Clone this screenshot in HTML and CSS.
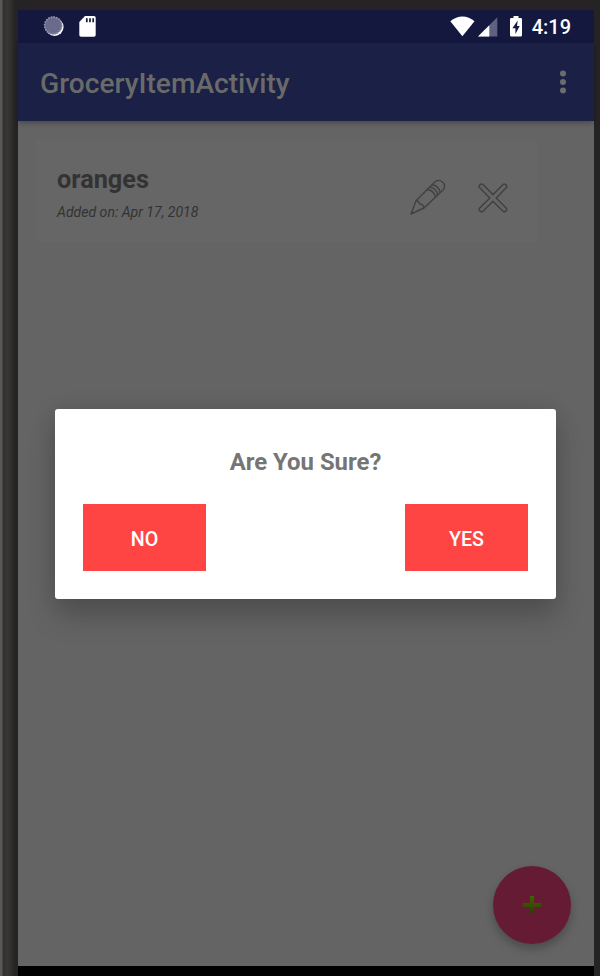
FILE: index.html
```
<!DOCTYPE html>
<html lang="en">
<head>
<meta charset="utf-8">
<title>GroceryItemActivity</title>
<link rel="stylesheet" href="styles.css">
</head>
<body>
<div class="device">
  <div class="screen">
    <header class="status">
      <svg class="sync" width="22" height="22" viewBox="0 0 22 22"><circle cx="11.600" cy="11" r="9" fill="#fff"/><circle cx="10.200" cy="9.500" r="9" fill="#686b8b"/><circle cx="10.200" cy="9.500" r="8.500" fill="none" stroke="#9496ad" stroke-width="1.800" stroke-dasharray="1.400 1.270"/></svg>
      <svg class="sd" width="17" height="21" viewBox="0 0 17 21"><path fill="#fff" d="M6 0h9q1.700 0 1.700 1.700v17.300q0 1.700-1.700 1.700H2q-1.700 0-1.700-1.700V6z"/><path stroke="#14183f" stroke-width="1.700" d="M7.800 2.300v4M11 2.300v4M14.200 2.300v4"/></svg>
      <svg class="wifi" width="26" height="21" viewBox="0 0 26 21"><path fill="#fff" d="M.3 5.200Q6 .4 12.500.4T24.500 5.200L12.400 20.200z"/></svg>
      <svg class="signal" width="20" height="20" viewBox="0 0 20 20"><path fill="#5e6180" d="M19.300.3v19.200H0z"/><path fill="#fff" d="M11.300 8.200v11.300H0z"/></svg>
      <svg class="battery" width="13" height="21" viewBox="0 0 13 21"><path fill="#fff" d="M3.500 0h5v2h2.300q1.200 0 1.200 1.200v16q0 1.300-1.200 1.300H1.200Q0 20.500 0 19.200v-16Q0 2 1.200 2h2.300z"/><path fill="#14183f" d="M7.700 4.500 2.400 12.200h3V18L9.700 10H7z"/></svg>
      <span class="clock">4:19</span>
    </header>
    <div class="toolbar">
      <h1>GroceryItemActivity</h1>
      <svg width="6" height="24" viewBox="0 0 6 24" fill="#6c6c6c"><circle cx="3" cy="3.500" r="3"/><circle cx="3" cy="12" r="3"/><circle cx="3" cy="20.500" r="3"/></svg>
    </div>
    <main class="content">
      <article class="card">
        <div class="item">
          <h2>oranges</h2>
          <p>Added on: Apr 17, 2018</p>
        </div>
        <svg class="pencil" width="36" height="36" viewBox="0 0 36 36" fill="none" stroke="#414141" stroke-width="1.400" stroke-linejoin="round"><path d="M1 35 6 21.800 24.500 3.200Q28.500-.3 32.500 3T33 11L14 29z"/><path d="M6 21.800q3-.2 3.600 3.200 3.600-.2 4.400 4M17.300 10.500q6.500.6 8.300 8M19.700 8.100q6.500.6 8.200 8M22.100 5.700q6.500.7 8.200 8M1.500 33 3 34.100"/></svg>
        <svg class="cross" width="30" height="30" viewBox="0 0 30 30" fill="none" stroke="#414141" stroke-width="1.500" stroke-linejoin="round"><path d="M15 11.600 25.300 1.300q1.300-.9 2.600.5t.5 2.700L18.200 15l10.200 10.300q.9 1.300-.5 2.700t-2.600.5L15 18.300 4.700 28.500q-1.300.9-2.700-.5t-.5-2.700L11.800 15 1.500 4.500Q.6 3.200 2 1.800t2.700-.5z"/></svg>
      </article>
      <button class="fab" aria-label="Add item"><svg width="20" height="20" viewBox="0 0 20 20"><defs><linearGradient id="plus" x2="0" y2="1"><stop stop-color="#456000"/><stop offset="1" stop-color="#284000"/></linearGradient></defs><path fill="url(#plus)" d="M8 1h4v7h7.200v4H12v7H8v-7H.8V8H8z"/></svg></button>
    </main>
    <section class="dialog" role="dialog">
      <h3>Are You Sure?</h3>
      <div class="actions"><button>NO</button><button>YES</button></div>
    </section>
  </div>
</div>
</body>
</html>
```
FILE: styles.css
```
* { box-sizing: border-box; }
body { margin: 0; font-family: Roboto, sans-serif; }
h1, h2, h3, p { margin: 0; }
svg { display: block; flex: none; }
button { border: 0; padding: 0; font-family: inherit; }

.device {
  height: 976px;
  padding: 10px 6px 10px 18px;
  background:
    linear-gradient(90deg, #5b5858 0 2px, #333130 3px, #393736 7px, #302e2e 11px, #252323 15px, #252323 18px, transparent 18px),
    linear-gradient(#252323 0 966px, #000 966px);
  box-shadow: inset -6px 0 #252323;
  overflow: hidden;
}
.screen {
  position: relative;
  display: flex;
  flex-direction: column;
  width: 576px;
  height: 956px;
  background: #646464;
}
.status {
  display: flex;
  align-items: flex-start;
  height: 33px;
  padding: 6px 23px 0 25px;
  background: #14183f;
}
.sd { margin-left: 14px; }
.wifi { margin-left: auto; }
.signal { margin: 1px 0 0 2px; }
.battery { margin-left: 12px; }
.clock { margin-left: 9px; color: #fff; font-size: 20px; font-weight: 500; line-height: 22px; }
.toolbar {
  z-index: 1;
  display: flex;
  align-items: center;
  justify-content: space-between;
  height: 78px;
  padding: 0 28px 0 22px;
  background: #1a2046;
  box-shadow: 0 2px 5px rgba(0, 0, 0, .28);
}
.toolbar h1 { padding-top: 3px; color: #6a6a6a; font-size: 28.150px; font-weight: 500; line-height: 34px; }
.content { display: flex; flex: 1; flex-direction: column; justify-content: space-between; padding: 18px 23px 22.500px 18px; }
.card {
  display: flex;
  width: 501px;
  height: 103px;
  padding: 26px 29px 0 21px;
  border-radius: 3px;
  background: #666;
  color: #333;
}
.item { flex: 1; }
.item h2 { font-size: 25.300px; font-weight: 700; line-height: 30px; }
.item p { margin-top: 8px; font-size: 14.050px; font-style: italic; line-height: 18px; }
.pencil { margin-top: 14px; }
.cross { margin: 18px .5px 0 31.500px; }
.fab {
  display: grid;
  place-items: center;
  align-self: flex-end;
  width: 78px;
  height: 78px;
  border-radius: 50%;
  background: #661b34;
  box-shadow: 0 5px 10px rgba(0, 0, 0, .26);
}
.dialog {
  position: absolute;
  z-index: 2;
  top: 399px;
  left: 37px;
  width: 501px;
  height: 190px;
  padding: 36px 28px 27px;
  border-radius: 3px;
  background: #fff;
  box-shadow: 0 19px 28px rgba(0, 0, 0, .18), 0 0 22px rgba(0, 0, 0, .11);
}
.dialog h3 { color: #757575; font-size: 23.900px; font-weight: 700; line-height: 34px; text-align: center; }
.actions { display: flex; justify-content: space-between; margin-top: 25px; }
.actions button { width: 123px; height: 67px; padding-top: 3px; background: #f44; color: #fff; font-size: 19.700px; font-weight: 500; }
```
